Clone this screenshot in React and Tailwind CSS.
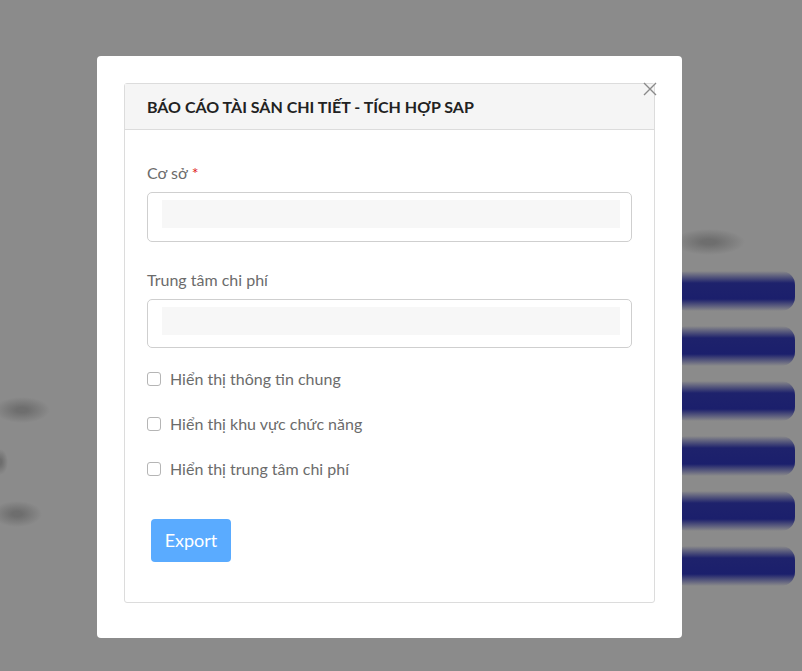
import React from "react";

function Checkbox({ label }) {
  return (
    <label className="flex items-center gap-[9px] h-[20px]">
      <span className="w-[14px] h-[14px] rounded-[3px] border border-[#b5b5b5] bg-white shrink-0" />
      <span className="text-[16px] text-[#6b6b6b]">{label}</span>
    </label>
  );
}

function Field({ label, required, h }) {
  return (
    <div className="flex flex-col">
      <div className="text-[16px] text-[#6b6b6b] h-[20px] leading-[20px]">
        {label}
        {required && <span className="text-[#e02020] ml-[4px]">*</span>}
      </div>
      <div className={`mt-[9px] border border-[#cfcfcf] rounded-[5px] pl-[14px] pr-[11px] pt-[7px] flex ${h}`}>
        <div className="flex-1 h-[28px] bg-[#f7f7f7]" />
      </div>
    </div>
  );
}

function Bar() {
  return (
    <div className="h-[40px] -my-[5px] rounded-[14px] bg-[linear-gradient(to_bottom,rgba(30,34,108,0)_0%,#1e226c_30%,#1b1f6c_70%,rgba(30,34,108,0)_100%)]" />
  );
}

const blob =
  "h-[26px] bg-[radial-gradient(ellipse_50%_50%_at_50%_50%,rgba(105,105,105,0.85)_20%,rgba(139,139,139,0)_100%)]";

export default function App() {
  return (
    <div
      className="relative w-[802px] h-[671px] overflow-hidden bg-[#8b8b8b]"
      style={{ fontFamily: "Lato, 'Open Sans', sans-serif" }}
    >
      {/* blurred page behind */}
      <div className="absolute inset-0 flex justify-between">
        <div className="flex flex-col pt-[397px] gap-[26px] w-[60px]">
          <div className={`${blob} w-[56px] -ml-[6px]`} />
          <div className={`${blob} w-[16px] -ml-[8px]`} />
          <div className={`${blob} w-[50px] -ml-[8px]`} />
        </div>
        <div className="flex flex-col pt-[229px] w-[122px] mr-[7px] gap-[25px]">
          <div className={`${blob} w-[72px] -mb-[4px]`} />
          <Bar />
          <Bar />
          <Bar />
          <Bar />
          <Bar />
          <Bar />
        </div>
      </div>

      {/* modal */}
      <div className="absolute left-[97px] top-[56px] w-[585px] h-[582px] bg-white rounded-[4px] pt-[27px] px-[27px] pb-[35px]">
        <button className="absolute right-[25px] top-[26px] w-[14px] h-[14px] text-[#8a8a8a]">
          <svg viewBox="0 0 14 14" width="14" height="14" fill="none" stroke="currentColor" strokeWidth="1.4">
            <path d="M1 1 L13 13 M13 1 L1 13" />
          </svg>
        </button>
        <div className="h-full border border-[#dcdcdc] rounded-[3px] flex flex-col">
          <div className="h-[46px] bg-[#f5f5f5] border-b border-[#dcdcdc] px-[22px] flex items-center">
            <span className="font-bold text-[16px] text-[#222]">
              BÁO CÁO TÀI SẢN CHI TIẾT - TÍCH HỢP SAP
            </span>
          </div>
          <div className="px-[22px] pt-[33px] flex flex-col">
            <Field label="Cơ sở" required h="h-[50px]" />
            <div className="h-[28px]" />
            <Field label="Trung tâm chi phí" h="h-[49px]" />
            <div className="flex flex-col gap-[25px] mt-[21px]">
              <Checkbox label="Hiển thị thông tin chung" />
              <Checkbox label="Hiển thị khu vực chức năng" />
              <Checkbox label="Hiển thị trung tâm chi phí" />
            </div>
            <div className="mt-[40px] pl-[4px]">
              <button className="w-[80px] h-[43px] rounded-[4px] bg-[#5aabff] text-white text-[18px]">
                Export
              </button>
            </div>
          </div>
        </div>
      </div>
    </div>
  );
}
